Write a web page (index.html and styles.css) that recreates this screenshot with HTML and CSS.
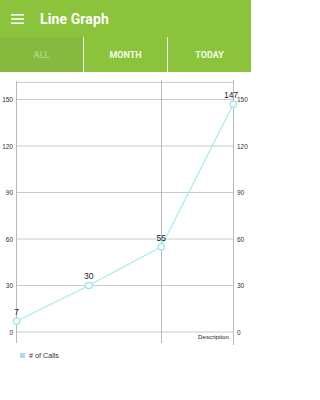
FILE: index.html
```html
<!DOCTYPE html>
<html>
<head>
<meta charset="utf-8">
<link rel="stylesheet" href="styles.css">
</head>
<body>
<div class="app">
  <header class="toolbar">
    <svg class="menu" width="14" height="12" viewBox="0 0 14 12">
      <rect x="0" y="1" width="13" height="1.6" fill="#fff"/>
      <rect x="0" y="5.2" width="13" height="1.6" fill="#fff"/>
      <rect x="0" y="9.4" width="13" height="1.6" fill="#fff"/>
    </svg>
    <span class="title">Line Graph</span>
  </header>
  <nav class="tabs">
    <div class="tab active">ALL</div>
    <div class="tab">MONTH</div>
    <div class="tab">TODAY</div>
  </nav>
  <svg class="chart" width="251" height="300" viewBox="0 0 251 300">
    <g stroke="#bdbdbd" stroke-width="0.8" fill="none">
      <line x1="16.5" y1="10.3" x2="233.5" y2="10.3"/>
      <line x1="16.5" y1="27.5" x2="233.5" y2="27.5"/>
      <line x1="16.5" y1="74" x2="233.5" y2="74"/>
      <line x1="16.5" y1="120.5" x2="233.5" y2="120.5"/>
      <line x1="16.5" y1="167" x2="233.5" y2="167"/>
      <line x1="16.5" y1="213.5" x2="233.5" y2="213.5"/>
      <line x1="16.5" y1="260" x2="233.5" y2="260"/>
    </g>
    <g stroke="#a8a8a8" stroke-width="0.8">
      <line x1="16.5" y1="9" x2="16.5" y2="271"/>
      <line x1="161.5" y1="8" x2="161.5" y2="271"/>
      <line x1="233.5" y1="8" x2="233.5" y2="273"/>
    </g>
    <g class="axis" text-anchor="end">
      <text x="13" y="30">150</text>
      <text x="13" y="76.5">120</text>
      <text x="13" y="123">90</text>
      <text x="13" y="169.5">60</text>
      <text x="13" y="216">30</text>
      <text x="13" y="262.5">0</text>
    </g>
    <g class="axis">
      <text x="237" y="30">150</text>
      <text x="237" y="76.5">120</text>
      <text x="237" y="123">90</text>
      <text x="237" y="169.5">60</text>
      <text x="237" y="216">30</text>
      <text x="237" y="262.5">0</text>
    </g>
    <polyline points="16.5,249.2 88.8,213.5 161.2,174.8 233.3,32.2" fill="none" stroke="#a6ecec" stroke-width="1.2"/>
    <g fill="#fff" stroke="#9fe6e6" stroke-width="1.3">
      <ellipse cx="16.5" cy="249.2" rx="3.3" ry="3"/>
      <ellipse cx="88.8" cy="213.5" rx="3.6" ry="3"/>
      <ellipse cx="161.2" cy="174.8" rx="3" ry="3.2"/>
      <ellipse cx="233.3" cy="32.2" rx="3.2" ry="3"/>
    </g>
    <g class="vals" text-anchor="middle">
      <text x="16.5" y="243">7</text>
      <text x="88.8" y="207">30</text>
      <text x="161.2" y="168.5">55</text>
      <text x="231" y="25.5">147</text>
    </g>
    <text class="desc" x="229" y="266.5" text-anchor="end">Description</text>
    <rect x="20" y="281" width="5" height="5" fill="#a6dde8"/>
    <text class="legend" x="29" y="286">#  of Calls</text>
  </svg>
</div>
</body>
</html>
```

FILE: styles.css
```css
html, body {
  margin: 0;
  padding: 0;
  background: #fff;
}
.app {
  width: 251px;
  height: 400px;
  display: flex;
  flex-direction: column;
  font-family: Roboto, "Liberation Sans", sans-serif;
}
.toolbar {
  height: 37px;
  background: #8bc43c;
  display: flex;
  align-items: center;
  padding-left: 11px;
  box-sizing: border-box;
}
.menu {
  display: block;
}
.title {
  margin-left: 15px;
  color: #fff;
  font-size: 14px;
  font-weight: 700;
  letter-spacing: 0.1px;
}
.tabs {
  height: 35px;
  display: flex;
  background: #8bc43c;
}
.tab {
  flex: 1;
  display: flex;
  align-items: center;
  justify-content: center;
  color: #f4fbe6;
  font-size: 9px;
  font-weight: 700;
  border-left: 1px solid #f4fae8;
}
.tab:first-child {
  border-left: none;
}
.tab.active {
  background: #86bb3f;
  color: #aed57a;
}
.chart {
  display: block;
}
.axis {
  font-family: "Liberation Sans", Arial, sans-serif;
  font-size: 6.5px;
  fill: #333;
}
.vals {
  font-family: "Liberation Sans", Arial, sans-serif;
  font-size: 8.5px;
  fill: #222;
}
.desc {
  font-family: "Liberation Sans", Arial, sans-serif;
  font-size: 6.2px;
  fill: #222;
}
.legend {
  font-family: "Liberation Sans", Arial, sans-serif;
  font-size: 7.2px;
  fill: #333;
}
```
